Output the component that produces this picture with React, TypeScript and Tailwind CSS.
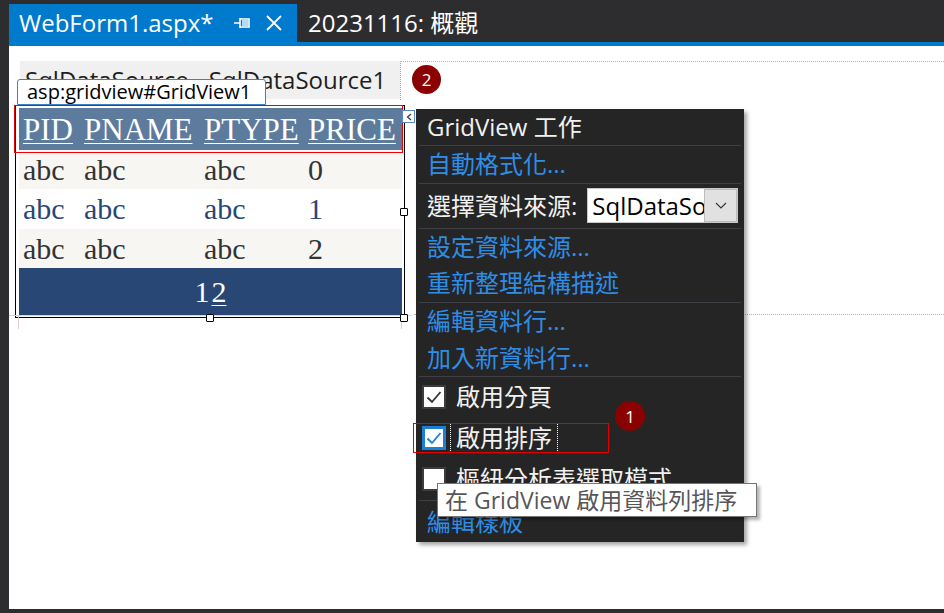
import React from 'react';

const UI = { fontFamily: '"Open Sans", "Noto Sans CJK TC", sans-serif' };
const SERIF = { fontFamily: '"Liberation Serif", "Noto Sans CJK TC", serif' };

const Sep = () => <div className="mx-[3px] h-px bg-[#3f3f46]" />;

const LinkRow = ({ text, h }: { text: string; h: string }) => (
  <div className={`${h} flex items-center pl-[11px] text-[24px] leading-none text-[#2e8ee6]`}>{text}</div>
);

const Check = ({ on, focus }: { on?: boolean; focus?: boolean }) => (
  <div
    className={`w-[24px] h-[24px] flex items-center justify-center bg-white ${
      focus ? 'border-[3px] border-[#1a7fd6]' : 'border-2 border-[#3c3c3c]'
    }`}
  >
    {on && (
      <svg width="16" height="14" viewBox="0 0 16 14">
        <path d="M1.5 7.5 L6 12 L14.5 2" fill="none" stroke={focus ? '#1a7fd6' : '#333'} strokeWidth="1.8" />
      </svg>
    )}
  </div>
);

const Handle = ({ cls }: { cls: string }) => (
  <div className={`absolute w-[8px] h-[8px] bg-white border border-black rounded-[1px] ${cls}`} />
);

const Badge = ({ n, cls }: { n: string; cls: string }) => (
  <div
    className={`absolute rounded-full bg-[#8b0000] text-white flex items-center justify-center text-[17px] leading-none ${cls}`}
  >
    {n}
  </div>
);

const rows = [
  { bg: 'bg-[#f7f6f3]', h: 'h-[39px]', c: ['abc', 'abc', 'abc', '0'], color: 'text-[#333333]' },
  { bg: 'bg-white', h: 'h-[40px]', c: ['abc', 'abc', 'abc', '1'], color: 'text-[#284775]' },
  { bg: 'bg-[#f7f6f3]', h: 'h-[39px]', c: ['abc', 'abc', 'abc', '2'], color: 'text-[#333333]' },
];
const cols = ['w-[61px]', 'w-[120px]', 'w-[104px]', 'flex-1'];

export default function App() {
  return (
    <div className="w-[944px] h-[613px] bg-[#2d2d30] overflow-hidden flex flex-col" style={UI}>
      {/* tab strip */}
      <div className="h-[42px] pt-[4px] flex items-stretch">
        <div className="ml-[9px] w-[288px] bg-[#007acc] flex items-center pl-[10px] text-white text-[24px] leading-none">
          <span>WebForm1.aspx*</span>
          <svg className="ml-[20px]" width="18" height="14" viewBox="0 0 18 14">
            <path d="M1 7 H7 M7 2 V12 M7 3 H16 V11 H7" fill="none" stroke="#ffffff" strokeWidth="1.6" />
            <rect x="9" y="4" width="6" height="6" fill="#b8d8f0" />
          </svg>
          <svg className="ml-[14px]" width="18" height="18" viewBox="0 0 18 18">
            <path d="M2 2 L16 16 M16 2 L2 16" stroke="#ffffff" strokeWidth="1.8" />
          </svg>
        </div>
        <div className="pl-[11px] flex items-center text-white text-[24px] leading-none">20231116: 概觀</div>
      </div>
      <div className="h-[4px] ml-[9px] bg-[#007acc]" />

      {/* design surface */}
      <div className="ml-[9px] h-[563px] bg-white relative">
        <div className="mt-[15px] flex">
          <div className="ml-[11px] w-[380px] h-[38px] bg-[#f0f0f0] flex items-center pl-[5px] text-[24px] leading-none text-[#1e1e1e] whitespace-nowrap overflow-hidden">
            SqlDataSource - SqlDataSource1
          </div>
          <div className="flex-1 border-t border-dotted border-[#b4b4b4] border-l border-l-[#a0a0a0] h-[39px]" />
        </div>

        {/* gridview */}
        <div className="ml-[6px] mt-[5px] w-[390px] border border-black pl-[3px] pr-[2px] pt-[2px] pb-[2px]" style={SERIF}>
          <div className="h-[42px] bg-[#5d7b9d] flex items-center text-[31px] leading-none text-white">
            {['PID', 'PNAME', 'PTYPE', 'PRICE'].map((h, i) => (
              <div key={h} className={`${cols[i]} pl-[4px] whitespace-nowrap`}>
                <span className="underline decoration-1 underline-offset-[3px]">{h}</span>
              </div>
            ))}
          </div>
          {rows.map((r, ri) => (
            <div key={ri} className={`${r.h} ${r.bg} ${r.color} flex items-center text-[30px] leading-none`}>
              {r.c.map((v, i) => (
                <div key={i} className={`${cols[i]} pl-[4px]`}>{v}</div>
              ))}
            </div>
          ))}
          <div className="h-[47px] bg-[#284775] flex items-center justify-center text-[30px] leading-none text-white">
            <span>1</span>
            <span className="ml-[2px] underline decoration-1 underline-offset-[3px]">2</span>
          </div>
        </div>

        {/* guide lines */}
        <div className="absolute left-0 top-[269px] w-[403px] h-px bg-[#e3cfd3]" />
        <div className="absolute left-[9px] top-[269px] w-px h-[14px] bg-[#e3cfd3]" />
        <div className="absolute left-[392px] top-[269px] w-px h-[14px] bg-[#e3cfd3]" />
        <div className="absolute left-[405px] right-0 top-[268px] border-t border-dotted border-[#b4b4b4]" />

        {/* selection overlays */}
        <div className="absolute left-[5px] top-[59px] w-[389px] h-[48px] border-[1.5px] border-[#ee0000]" />
        <div className="absolute left-[8px] top-[33px] w-[249px] h-[26px] bg-white border border-[#3f7fc4] rounded-t-[3px] flex items-center pl-[9px] text-[20px] leading-none text-black whitespace-nowrap">
          asp:gridview#GridView1
        </div>
        <Handle cls="left-[391px] top-[162px]" />
        <Handle cls="left-[197px] top-[268px]" />
        <Handle cls="left-[391px] top-[268px]" />
        <div className="absolute left-[393px] top-[64px] w-[13px] h-[13px] bg-white border border-[#5b8ac8] flex items-center justify-center">
          <svg width="6" height="8" viewBox="0 0 6 8">
            <path d="M5 1 L1.5 4 L5 7" fill="none" stroke="#333" strokeWidth="1.2" />
          </svg>
        </div>

        {/* smart tag panel */}
        <div className="absolute left-[407px] top-[63px] w-[328px] h-[433px] bg-[#252526] shadow-[3px_3px_4px_rgba(0,0,0,0.35)] flex flex-col">
          <div className="h-[36px] flex items-center pl-[11px] text-[24px] leading-none text-[#f1f1f1]">GridView 工作</div>
          <Sep />
          <LinkRow text="自動格式化..." h="h-[37px]" />
          <Sep />
          <div className="h-[44px] flex items-center pl-[11px] text-[24px] leading-none text-[#f1f1f1]">
            <span>選擇資料來源:</span>
            <div className="ml-[10px] w-[151px] h-[35px] bg-white border border-[#c8c8c8] flex">
              <div className="flex-1 overflow-hidden whitespace-nowrap flex items-center pl-[4px] text-black">SqlDataSo</div>
              <div className="w-[33px] bg-[#e1e1e1] border border-[#bcbcbc] flex items-center justify-center">
                <svg width="12" height="7" viewBox="0 0 12 7">
                  <path d="M1 1 L6 6 L11 1" fill="none" stroke="#333" strokeWidth="1.1" />
                </svg>
              </div>
            </div>
          </div>
          <Sep />
          <LinkRow text="設定資料來源..." h="h-[36px]" />
          <LinkRow text="重新整理結構描述" h="h-[37px]" />
          <Sep />
          <LinkRow text="編輯資料行..." h="h-[37px]" />
          <LinkRow text="加入新資料行..." h="h-[37px]" />
          <Sep />
          <div className="h-[40px] flex items-center pl-[6px] text-[24px] leading-none text-[#f1f1f1]">
            <Check on />
            <span className="ml-[10px]">啟用分頁</span>
          </div>
          <div className="h-[41px] flex items-center pl-[6px] text-[24px] leading-none text-[#f1f1f1] relative">
            <Check on focus />
            <span className="ml-[4px] px-[5px] h-[27px] flex items-center border-x border-dotted border-white">啟用排序</span>
            <div className="absolute left-[-3px] top-[6px] w-[196px] h-[30px] border border-[#e00000]" />
          </div>
          <div className="h-[42px] flex items-center pl-[6px] text-[24px] leading-none text-[#f1f1f1]">
            <Check />
            <span className="ml-[10px]">樞紐分析表選取模式</span>
          </div>
          <Sep />
          <LinkRow text="編輯樣板" h="h-[41px]" />
        </div>

        {/* tooltip */}
        <div className="absolute left-[428px] top-[437px] w-[320px] h-[34px] bg-white border border-[#767676] shadow-[3px_3px_3px_rgba(0,0,0,0.3)] flex items-center pl-[7px] text-[23px] leading-none text-[#575757] whitespace-nowrap">
          在 GridView 啟用資料列排序
        </div>

        <Badge n="2" cls="left-[403px] top-[19px] w-[29px] h-[29px]" />
        <Badge n="1" cls="left-[606px] top-[355px] w-[30px] h-[30px]" />
      </div>
    </div>
  );
}
